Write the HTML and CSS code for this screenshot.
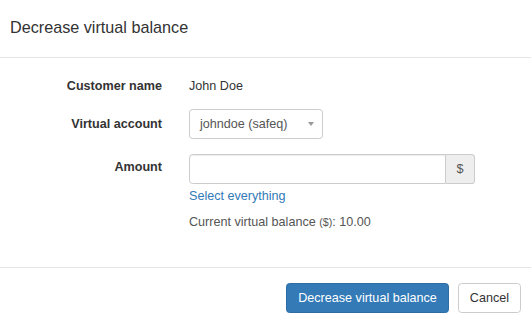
FILE: index.html
```html
<!DOCTYPE html>
<html lang="en">
<head>
  <meta charset="UTF-8" />
  <title>Decrease virtual balance</title>
  <link rel="stylesheet" href="styles.css">
</head>
<body>
  <div class="modal">
    <div class="modal-header">
      <h4 class="modal-title">Decrease virtual balance</h4>
    </div>

    <form class="modal-body">
      <div class="form-row static">
        <label>Customer name</label>
        <div class="control">John Doe</div>
      </div>

      <div class="form-row">
        <label for="account">Virtual account</label>
        <div class="control">
          <div class="select">
            <span>johndoe (safeq)</span>
            <span class="caret"></span>
          </div>
        </div>
      </div>

      <div class="form-row amount">
        <label for="amount">Amount</label>
        <div class="control">
          <div class="input-group">
            <input type="text" id="amount" />
            <span class="addon">$</span>
          </div>
          <a class="select-all" href="#">Select everything</a>
          <p class="balance">Current virtual balance <small>($)</small>: 10.00</p>
        </div>
      </div>
    </form>

    <div class="modal-footer">
      <button class="btn btn-primary" type="button">Decrease virtual balance</button>
      <button class="btn btn-default" type="button">Cancel</button>
    </div>
  </div>
</body>
</html>
```

FILE: styles.css
```css
body {
  margin: 0;
  font-family: 'Liberation Sans', Arial, sans-serif;
  font-size: 12.6px;
  color: #333;
  background: #fff;
}
.modal {
  width: 531px;
}
.modal-header {
  padding: 14px 10px 17px 10px;
  border-bottom: 1px solid #e5e5e5;
}
.modal-title {
  margin: 0;
  font-size: 16.2px;
  font-weight: normal;
  line-height: 26px;
}
.modal-body {
  margin: 0;
  padding: 13px 0 36px;
}
.form-row {
  display: flex;
  gap: 27px;
  margin-bottom: 15px;
}
.form-row.static {
  margin-bottom: 8px;
}
.form-row label {
  width: 162px;
  flex: none;
  text-align: right;
  font-weight: bold;
  line-height: 30px;
}
.form-row.static .control {
  line-height: 30px;
}
.form-row.amount {
  margin-bottom: 0;
}
.form-row.amount label {
  line-height: 27px;
}
.select {
  width: 134px;
  height: 30px;
  box-sizing: border-box;
  border: 1px solid #ccc;
  border-radius: 3.6px;
  display: flex;
  align-items: center;
  justify-content: space-between;
  padding: 0 8px 0 10px;
  color: #555;
}
.caret {
  width: 0;
  height: 0;
  border-left: 3px solid transparent;
  border-right: 3px solid transparent;
  border-top: 4px solid #999;
}
.input-group {
  display: flex;
  width: 286px;
  height: 30px;
}
.input-group input {
  flex: 1;
  min-width: 0;
  box-sizing: border-box;
  height: 30px;
  border: 1px solid #ccc;
  border-radius: 3.6px 0 0 3.6px;
  box-shadow: inset 0 1px 1px rgba(0, 0, 0, 0.075);
  font: inherit;
  padding: 0 10px;
}
.addon {
  width: 29px;
  box-sizing: border-box;
  border: 1px solid #ccc;
  border-left: none;
  border-radius: 0 3.6px 3.6px 0;
  background: #eee;
  color: #555;
  display: flex;
  align-items: center;
  justify-content: center;
}
.select-all {
  display: block;
  margin-top: 3px;
  line-height: 18px;
  color: #337ab7;
  text-decoration: none;
}
.balance {
  margin: 8px 0 0;
  line-height: 18px;
  color: #555;
}
.balance small {
  font-size: 10.7px;
}
.modal-footer {
  border-top: 1px solid #e5e5e5;
  padding: 15px 10px 15px;
  display: flex;
  justify-content: flex-end;
  gap: 9px;
}
.btn {
  height: 30px;
  box-sizing: border-box;
  padding: 0 11px;
  font: inherit;
  border-radius: 3.6px;
  border: 1px solid #ccc;
  cursor: pointer;
}
.btn-primary {
  background: #337ab7;
  border-color: #2e6da4;
  color: #fff;
}
.btn-default {
  background: #fff;
  color: #333;
}
```
